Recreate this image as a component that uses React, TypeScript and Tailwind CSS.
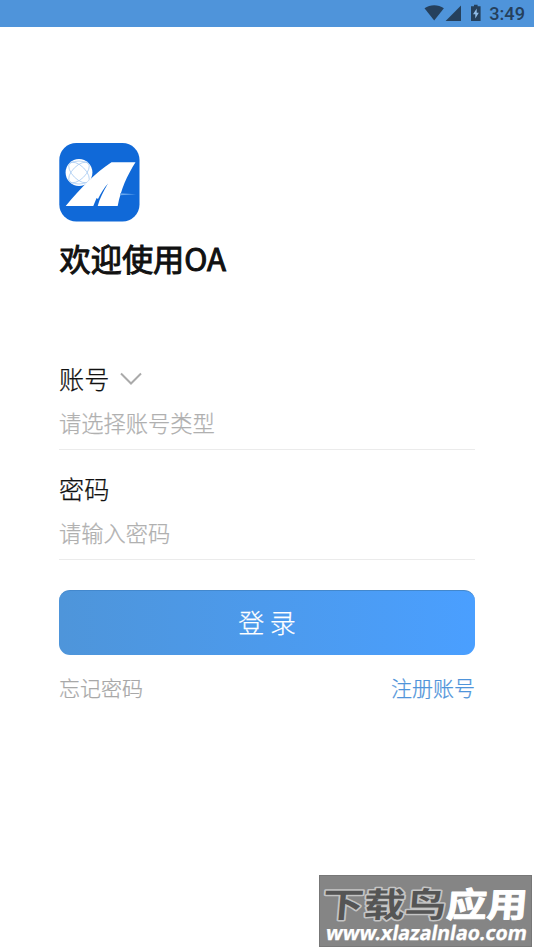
import React from "react";

function StatusBar() {
  return (
    <header className="flex h-[27px] items-center justify-end bg-[#4f94da] pr-[9px] text-[#25405c] [-webkit-text-stroke:0px]">
      <svg className="h-[27px] w-[62px]" viewBox="0 0 62 27" fill="currentColor" aria-hidden="true">
        <path d="M0.5 8.2C6.2 4.2 14.2 4.2 19.9 8.2L10.2 20.6Z" />
        <path d="M37 5.6V21H21.6Z" />
        <path d="M47 6.2h3V4.8h3.6v1.4h3V21H47z" />
        <path d="M52.7 8.4L49 14.2h2.3v4.4l3.5-5.9h-2.1z" fill="#8fbbe6" />
      </svg>
      <span className="ml-[3px] pt-px font-['Roboto',sans-serif] text-[18.2px] leading-[26px] font-medium">3:49</span>
    </header>
  );
}

function Logo() {
  return (
    <svg className="block h-[80px] w-[81px]" viewBox="0 0 81 80" aria-label="OA">
      <rect x="0.3" y="1" width="80.2" height="78.6" rx="17" fill="#1069d8" />
      <circle cx="20" cy="30.5" r="13.4" fill="#fff" />
      <g fill="none" stroke="#a9cbf2" strokeWidth="0.8">
        <ellipse cx="20" cy="30.5" rx="13" ry="6.5" transform="rotate(45 20 30.5)" />
        <ellipse cx="20" cy="30.5" rx="13" ry="6.5" transform="rotate(-45 20 30.5)" />
        <path d="M11 21Q20 17 29 21M11 40Q20 44 29 40" />
      </g>
      <path d="M6.7 64C22 46 36 31 52.5 20.3H76.5C68 34 62 47 58.7 64H38.7C40.5 57 44.5 49 49 41.5C45 46 41.5 51.5 39 57L37.6 56L34.3 64Z" fill="#fff" />
      <path d="M61 51.2L77 52.2L61 53.3Z" fill="#69a7ee" />
    </svg>
  );
}

function Field({ label, placeholder, arrow = false }: { label: string; placeholder: string; arrow?: boolean }) {
  return (
    <div className="h-[110px] border-b border-[#ebebeb]">
      <div className="box-content flex h-[36px] items-center pt-[20px]">
        <label className="text-[25.2px] leading-[36px] text-[#111]">{label}</label>
        {arrow && (
          <svg className="mt-px ml-[11px] h-[14px] w-[22px]" viewBox="0 0 22 14" fill="none" stroke="#aaa" strokeWidth="2" aria-hidden="true">
            <path d="M1 1.5L11 11.5L21 1.5" />
          </svg>
        )}
      </div>
      <div className="pt-[10px] text-[22.25px] leading-[32px] text-[#b0b0b0]">{placeholder}</div>
    </div>
  );
}

function Watermark() {
  return (
    <div className="absolute top-[875px] left-[319px] h-[72px] w-[213px] border border-[#777] bg-[#858585]">
      <svg className="block h-[70px] w-[211px] overflow-visible" viewBox="0 0 211 70">
        <g fontFamily="Noto Sans CJK SC, sans-serif" fontWeight="700" fontSize="34" strokeLinejoin="round" transform="translate(2 0) skewX(-5)">
          <text x="3" y="41" textLength="124" lengthAdjust="spacingAndGlyphs" fill="#555" stroke="#c4c4c4" strokeWidth="3" paintOrder="stroke">下载鸟</text>
          <text x="127" y="41" textLength="81" lengthAdjust="spacingAndGlyphs" fill="#fff" stroke="#fff" strokeWidth="1">应用</text>
        </g>
        <text transform="translate(5 63.5) skewX(-10)" textLength="201" lengthAdjust="spacingAndGlyphs" fill="#fff" stroke="#fff" strokeWidth="0.3" fontFamily="Noto Sans, sans-serif" fontSize="20" fontWeight="700">www.xlazalnlao.com</text>
      </svg>
    </div>
  );
}

export default function App() {
  return (
    <div className="relative h-[950px] w-[534px] overflow-hidden bg-white font-['Noto_Sans_CJK_SC',sans-serif] font-light [-webkit-text-stroke:0.25px_currentColor]">
      <StatusBar />
      <main className="px-[59px] pt-[115px]">
        <Logo />
        <h1 className="mt-[13px] ml-[0.5px] text-[31.2px] leading-[46px] font-normal text-[#111] [-webkit-text-stroke:1px_#111]">欢迎使用OA</h1>
        <div className="mt-[59px]">
          <Field label="账号" placeholder="请选择账号类型" arrow />
          <Field label="密码" placeholder="请输入密码" />
        </div>
        <button className="mt-[30px] block h-[65px] w-full rounded-[11px] border-t border-[#4388cd] bg-linear-to-r from-[#4e95da] to-[#4a9fff] pb-[3px] text-[26px] text-white">
          登 录
        </button>
        <div className="mt-[17px] flex justify-between text-[21px] leading-[31px]">
          <a className="text-[#a8a8a8]">忘记密码</a>
          <a className="text-[#4f94da]">注册账号</a>
        </div>
      </main>
      <Watermark />
    </div>
  );
}
